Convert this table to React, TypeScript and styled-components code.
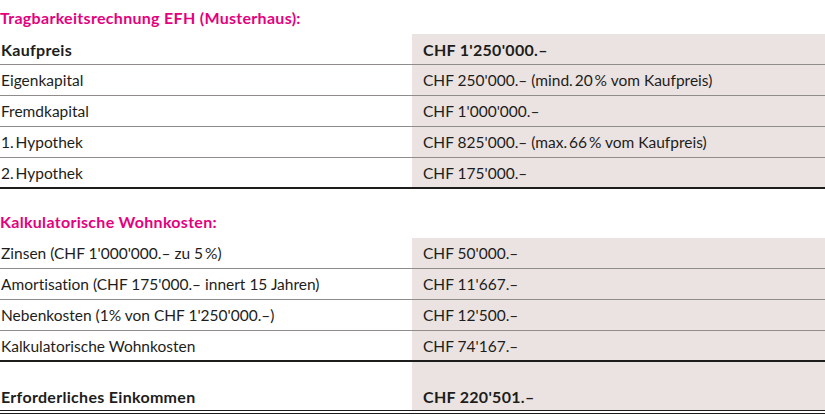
import styled, { createGlobalStyle } from "styled-components";

interface IRow {
  label: string;
  value: string;
  bold?: boolean;
}

const kaufRows: IRow[] = [
  { label: "Kaufpreis", value: "CHF 1'250'000.–", bold: true },
  { label: "Eigenkapital", value: "CHF 250'000.– (mind.\u200920\u2009% vom Kaufpreis)" },
  { label: "Fremdkapital", value: "CHF 1'000'000.–" },
  { label: "1.\u2009Hypothek", value: "CHF 825'000.– (max.\u200966\u2009% vom Kaufpreis)" },
  { label: "2.\u2009Hypothek", value: "CHF 175'000.–" },
];

const kostenRows: IRow[] = [
  { label: "Zinsen (CHF 1'000'000.– zu 5\u2009%)", value: "CHF 50'000.–" },
  {
    label: "Amortisation (CHF 175'000.– innert 15 Jahren)",
    value: "CHF 11'667.–",
  },
  { label: "Nebenkosten (1% von CHF 1'250'000.–)", value: "CHF 12'500.–" },
  { label: "Kalkulatorische Wohnkosten", value: "CHF 74'167.–" },
];

export default function App() {
  return (
    <>
      <GlobalStyle />
      <Page>
        <Heading $height={34}>Tragbarkeitsrechnung EFH (Musterhaus):</Heading>
        <Table>
          {kaufRows.map((row, idx) => (
            <Row key={idx} $last={idx === kaufRows.length - 1}>
              <Label $bold={row.bold}>{row.label}</Label>
              <Value $bold={row.bold}>{row.value}</Value>
            </Row>
          ))}
        </Table>

        <Heading $height={49}>Kalkulatorische Wohnkosten:</Heading>
        <Table>
          {kostenRows.map((row, idx) => (
            <Row key={idx} $last={idx === kostenRows.length - 1}>
              <Label>{row.label}</Label>
              <Value>{row.value}</Value>
            </Row>
          ))}
          <TotalRow>
            <Label $bold>Erforderliches Einkommen</Label>
            <Value $bold>CHF 220'501.–</Value>
          </TotalRow>
        </Table>
      </Page>
    </>
  );
}

const GlobalStyle = createGlobalStyle`
  body {
    margin: 0;
    background: #ffffff;
  }
`;

const Page = styled.div`
  width: 825px;
  height: 416px;
  overflow: hidden;
  background: #ffffff;
  font-family: Lato, "Liberation Sans", sans-serif;
  font-size: 15.5px;
  font-variant-ligatures: none;
  color: #1d1d1b;
`;

const Heading = styled.h2<{ $height: number }>`
  display: flex;
  align-items: flex-end;
  margin: 0;
  padding-bottom: 7px;
  height: ${(props) => props.$height}px;
  box-sizing: border-box;
  line-height: 18px;
  font-size: 16px;
  font-weight: 700;
  letter-spacing: 0.3px;
  color: #e5007e;
`;

const Table = styled.div`
  display: flex;
  flex-direction: column;
`;

const Row = styled.div<{ $last?: boolean }>`
  display: grid;
  grid-template-columns: 412px 1fr;
  height: 31px;
  box-sizing: border-box;
  border-bottom: ${(props) =>
    props.$last ? "2px solid #1d1d1b" : "1px solid #8f8c8b"};
`;

const TotalRow = styled(Row)`
  height: 52px;
  border-bottom: 4px double #1d1d1b;
`;

const Label = styled.div<{ $bold?: boolean }>`
  display: flex;
  align-items: center;
  height: 100%;
  box-sizing: border-box;
  padding-left: 1px;
  font-size: ${(props) => (props.$bold ? "16px" : "15.5px")};
  font-weight: ${(props) => (props.$bold ? 700 : 400)};
  letter-spacing: ${(props) => (props.$bold ? "0.3px" : "0")};

  ${TotalRow} & {
    align-items: flex-end;
    padding-bottom: 4px;
  }
`;

const Value = styled(Label)`
  padding-left: 11px;
  background: #ebe3e2;
`;
